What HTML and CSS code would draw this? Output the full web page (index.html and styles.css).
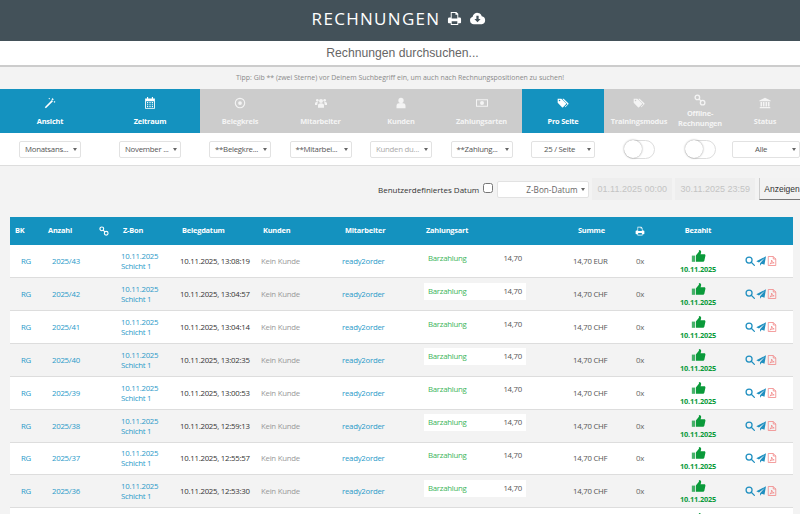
FILE: index.html
```html
<!DOCTYPE html>
<html lang="en">
<head>
    <meta charset="UTF-8">
    <meta name="viewport" content="width=device-width, initial-scale=1.0">
    <title>Rechnungen</title>
    <link rel="stylesheet" href="styles.css">
</head>
<body>

    <svg class="icon-defs" width="0" height="0">
        <symbol id="i-print" viewBox="0 0 16 16"><path fill-rule="evenodd" d="M4 1h6l2 2v4h1.500a1.500 1.500 0 0 1 1.500 1.500V12a1 1 0 0 1-1 1h-2v2H4v-2H2a1 1 0 0 1-1-1V8.500A1.500 1.500 0 0 1 2.500 7H4zM5 2.200V8h6V4H9V2.200zM5 11v2.900h6V11z"/></symbol>
        <symbol id="i-cloud" viewBox="0 0 18 16"><path fill-rule="evenodd" d="M5 14a4 4 0 0 1-1.200-7.800A5 5 0 0 1 9.500 2a4.500 4.500 0 0 1 4 3.500A4.300 4.300 0 0 1 13.500 14zM7.800 5v3.500H5.700L9 12l3.300-3.500h-2.100V5z"/></symbol>
        <symbol id="i-wand" viewBox="0 0 16 16"><path d="M1 13.500 10.500 4l1.500 1.500L2.500 15z"/><path d="M11.500 1l.6 1.300 1.300.6-1.300.6-.6 1.300-.6-1.300-1.300-.6 1.300-.6zM14 5l.5 1 1 .5-1 .5-.5 1-.5-1-1-.5 1-.5zM7 1l.4.8.8.4-.8.4-.4.8-.4-.8-.8-.4.8-.4z"/></symbol>
        <symbol id="i-calendar" viewBox="0 0 16 16"><path fill-rule="evenodd" d="M4 0h1.500v2h5V0H12v2h2.500v13.500h-13V2H4zM2.700 5.500v9h10.600v-9zM4 6.700h1.600v1.600H4zM7.200 6.700h1.600v1.600H7.200zM10.400 6.700H12v1.600h-1.600zM4 9.500h1.600v1.600H4zM7.200 9.500h1.600v1.600H7.200zM10.400 9.500H12v1.600h-1.600zM4 12h1.600v1.500H4zM7.200 12h1.600v1.500H7.200zM10.400 12H12v1.500h-1.600z"/></symbol>
        <symbol id="i-target" viewBox="0 0 16 16"><path fill-rule="evenodd" d="M8 1a7 7 0 1 1 0 14A7 7 0 0 1 8 1zm0 1.500a5.500 5.500 0 1 0 0 11 5.500 5.500 0 0 0 0-11zM8 5.500a2.500 2.500 0 1 1 0 5 2.500 2.500 0 0 1 0-5z"/></symbol>
        <symbol id="i-users" viewBox="0 0 18 16"><circle cx="9" cy="5" r="3"/><circle cx="3.500" cy="4" r="2"/><circle cx="14.500" cy="4" r="2"/><path d="M4.500 15v-3.500C4.500 9.500 6 8.500 9 8.500s4.500 1 4.500 3V15z"/><path d="M0 11V8.500C0 7 1.500 6.500 4 6.500 4.500 7.500 3.500 8.500 3.300 11zM18 11V8.500c0-1.500-1.500-2-4-2-.5 1 .5 2 .7 4.500z"/></symbol>
        <symbol id="i-user" viewBox="0 0 16 16"><circle cx="8" cy="4.500" r="3.500"/><path d="M2 15v-3.500C2 9 4 8 8 8s6 1 6 3.500V15z"/></symbol>
        <symbol id="i-money" viewBox="0 0 18 16"><path fill-rule="evenodd" d="M0 2.500h18v11H0zM1.500 4v8h15V4zM9 5a3 3 0 1 1 0 6 3 3 0 0 1 0-6z"/></symbol>
        <symbol id="i-tags" viewBox="0 0 18 16"><path fill-rule="evenodd" d="M1 1.500h5.500l7 7a1 1 0 0 1 0 1.500l-4.500 4.500a1 1 0 0 1-1.500 0L1 7.500zM3.800 3a1.200 1.200 0 1 0 0 2.400 1.200 1.200 0 0 0 0-2.400z"/><path d="M8.500 1.500h1.500l7 7a1 1 0 0 1 0 1.500l-4.500 4.500-.8-.8 4-4-7-7z"/></symbol>
        <symbol id="i-link" viewBox="0 0 16 16"><g fill="none" stroke="currentColor" stroke-width="1.800"><circle cx="4.500" cy="4.500" r="3"/><circle cx="11.500" cy="11.500" r="3"/><path d="M6.500 6.500l3 3"/></g></symbol>
        <symbol id="i-bank" viewBox="0 0 16 16"><path d="M8 1l7.500 3.500v1H.5v-1zM2 6.500h2.200v6H2zM5.300 6.500h2v6h-2zM8.700 6.500h2v6h-2zM11.800 6.500H14v6h-2.200zM1 13.200h14V15H1z"/></symbol>
        <symbol id="i-thumb" viewBox="0 0 18 16"><path opacity=".75" d="M1 7.500h3.800V15H1z"/><path d="M5.800 7.500 9.500 3V.8c1.800 0 2.700 1 2.700 2.400 0 1-.4 2-.8 2.800h4.500c1 0 1.600.8 1.400 1.800l-1.300 6c-.2.800-.8 1.200-1.500 1.200H5.800z"/></symbol>
        <symbol id="i-search" viewBox="0 0 16 16"><g fill="none" stroke="currentColor" stroke-width="2"><circle cx="6.500" cy="6.500" r="4.800"/><path d="M10 10l5 5" stroke-linecap="round"/></g></symbol>
        <symbol id="i-plane" viewBox="0 0 16 16"><path d="M16 .5 13.500 14 9 12.200 6.500 15.500v-4L14 3 4.700 10.200.5 8.500z"/></symbol>
        <symbol id="i-pdf" viewBox="0 0 14 16"><g fill="none" stroke="currentColor" stroke-width="1.200"><path d="M1 .8h8l4 4v10.400H1z"/><path d="M9 .8v4h4"/><path d="M3.500 13c2-1.500 3-4 3-6.500 0 2 1.500 4 4 4.500-2.500 0-5 .5-7 2z"/></g></symbol>
    </svg>

    <header class="page-header">
        <span class="page-title">RECHNUNGEN</span>
        <svg class="title-icon"><use href="#i-print"/></svg>
        <svg class="title-icon title-icon-wide"><use href="#i-cloud"/></svg>
    </header>

    <div class="search-bar">Rechnungen durchsuchen...</div>
    <p class="tip">Tipp: Gib ** (zwei Sterne) vor Deinem Suchbegriff ein, um auch nach Rechnungspositionen zu suchen!</p>

    <nav class="tabs">
        <div class="tab active"><svg><use href="#i-wand"/></svg><span>Ansicht</span></div>
        <div class="tab active"><svg><use href="#i-calendar"/></svg><span>Zeitraum</span></div>
        <div class="tab"><svg><use href="#i-target"/></svg><span>Belegkreis</span></div>
        <div class="tab"><svg><use href="#i-users"/></svg><span>Mitarbeiter</span></div>
        <div class="tab"><svg><use href="#i-user"/></svg><span>Kunden</span></div>
        <div class="tab"><svg><use href="#i-money"/></svg><span>Zahlungsarten</span></div>
        <div class="tab active"><svg><use href="#i-tags"/></svg><span>Pro Seite</span></div>
        <div class="tab"><svg><use href="#i-tags"/></svg><span>Trainingsmodus</span></div>
        <div class="tab tab-tight"><svg><use href="#i-link"/></svg><span>Offline-<br>Rechnungen</span></div>
        <div class="tab tab-last"><svg><use href="#i-bank"/></svg><span>Status</span></div>
    </nav>

    <div class="filters">
        <div class="filter"><div class="select">Monatsans...</div></div>
        <div class="filter"><div class="select">November ...</div></div>
        <div class="filter"><div class="select">**Belegkre...</div></div>
        <div class="filter"><div class="select">**Mitarbei...</div></div>
        <div class="filter"><div class="select select-muted">Kunden du...</div></div>
        <div class="filter"><div class="select">**Zahlung...</div></div>
        <div class="filter"><div class="select select-wide">25 / Seite</div></div>
        <div class="filter"><div class="toggle"></div></div>
        <div class="filter"><div class="toggle"></div></div>
        <div class="filter filter-last"><div class="select select-status">Alle</div></div>
    </div>

    <div class="date-row">
        <label class="date-label">Benutzerdefiniertes Datum</label>
        <input type="checkbox" class="date-check">
        <div class="select select-date">Z-Bon-Datum</div>
        <div class="date-input">01.11.2025 00:00</div>
        <div class="date-input">30.11.2025 23:59</div>
        <button class="show-btn">Anzeigen</button>
    </div>

    <table class="invoices">
        <colgroup>
            <col class="c-bk"><col class="c-num"><col class="c-link"><col class="c-zbon"><col class="c-date"><col class="c-cust"><col class="c-staff"><col class="c-pay"><col class="c-sum"><col class="c-print"><col class="c-paid"><col class="c-act">
        </colgroup>
        <thead>
            <tr>
                <th class="bk">BK</th>
                <th class="num">Anzahl</th>
                <th class="link-col"><svg class="th-icon"><use href="#i-link"/></svg></th>
                <th class="zbon">Z-Bon</th>
                <th class="date">Belegdatum</th>
                <th class="cust">Kunden</th>
                <th class="staff">Mitarbeiter</th>
                <th class="pay">Zahlungsart</th>
                <th class="sum">Summe</th>
                <th class="print"><svg class="th-icon"><use href="#i-print"/></svg></th>
                <th class="paid">Bezahlt</th>
                <th></th>
            </tr>
        </thead>
        <tbody>
            <tr>
                <td class="bk"><a>RG</a></td><td class="num"><a>2025/43</a></td><td></td>
                <td class="zbon"><a>10.11.2025<br>Schicht 1</a></td><td class="date">10.11.2025, 13:08:19</td>
                <td class="cust">Kein Kunde</td><td class="staff"><a>ready2order</a></td>
                <td class="pay"><div class="pay-box"><span>Barzahlung</span><span class="amount">14,70</span></div></td>
                <td class="sum">14,70 EUR</td><td class="print">0x</td>
                <td class="paid"><svg class="thumb"><use href="#i-thumb"/></svg><b>10.11.2025</b></td>
                <td class="actions"><svg class="blue"><use href="#i-search"/></svg><svg class="blue"><use href="#i-plane"/></svg><svg class="red"><use href="#i-pdf"/></svg></td>
            </tr>
            <tr>
                <td class="bk"><a>RG</a></td><td class="num"><a>2025/42</a></td><td></td>
                <td class="zbon"><a>10.11.2025<br>Schicht 1</a></td><td class="date">10.11.2025, 13:04:57</td>
                <td class="cust">Kein Kunde</td><td class="staff"><a>ready2order</a></td>
                <td class="pay"><div class="pay-box"><span>Barzahlung</span><span class="amount">14,70</span></div></td>
                <td class="sum">14,70 CHF</td><td class="print">0x</td>
                <td class="paid"><svg class="thumb"><use href="#i-thumb"/></svg><b>10.11.2025</b></td>
                <td class="actions"><svg class="blue"><use href="#i-search"/></svg><svg class="blue"><use href="#i-plane"/></svg><svg class="red"><use href="#i-pdf"/></svg></td>
            </tr>
            <tr>
                <td class="bk"><a>RG</a></td><td class="num"><a>2025/41</a></td><td></td>
                <td class="zbon"><a>10.11.2025<br>Schicht 1</a></td><td class="date">10.11.2025, 13:04:14</td>
                <td class="cust">Kein Kunde</td><td class="staff"><a>ready2order</a></td>
                <td class="pay"><div class="pay-box"><span>Barzahlung</span><span class="amount">14,70</span></div></td>
                <td class="sum">14,70 CHF</td><td class="print">0x</td>
                <td class="paid"><svg class="thumb"><use href="#i-thumb"/></svg><b>10.11.2025</b></td>
                <td class="actions"><svg class="blue"><use href="#i-search"/></svg><svg class="blue"><use href="#i-plane"/></svg><svg class="red"><use href="#i-pdf"/></svg></td>
            </tr>
            <tr>
                <td class="bk"><a>RG</a></td><td class="num"><a>2025/40</a></td><td></td>
                <td class="zbon"><a>10.11.2025<br>Schicht 1</a></td><td class="date">10.11.2025, 13:02:35</td>
                <td class="cust">Kein Kunde</td><td class="staff"><a>ready2order</a></td>
                <td class="pay"><div class="pay-box"><span>Barzahlung</span><span class="amount">14,70</span></div></td>
                <td class="sum">14,70 CHF</td><td class="print">0x</td>
                <td class="paid"><svg class="thumb"><use href="#i-thumb"/></svg><b>10.11.2025</b></td>
                <td class="actions"><svg class="blue"><use href="#i-search"/></svg><svg class="blue"><use href="#i-plane"/></svg><svg class="red"><use href="#i-pdf"/></svg></td>
            </tr>
            <tr>
                <td class="bk"><a>RG</a></td><td class="num"><a>2025/39</a></td><td></td>
                <td class="zbon"><a>10.11.2025<br>Schicht 1</a></td><td class="date">10.11.2025, 13:00:53</td>
                <td class="cust">Kein Kunde</td><td class="staff"><a>ready2order</a></td>
                <td class="pay"><div class="pay-box"><span>Barzahlung</span><span class="amount">14,70</span></div></td>
                <td class="sum">14,70 CHF</td><td class="print">0x</td>
                <td class="paid"><svg class="thumb"><use href="#i-thumb"/></svg><b>10.11.2025</b></td>
                <td class="actions"><svg class="blue"><use href="#i-search"/></svg><svg class="blue"><use href="#i-plane"/></svg><svg class="red"><use href="#i-pdf"/></svg></td>
            </tr>
            <tr>
                <td class="bk"><a>RG</a></td><td class="num"><a>2025/38</a></td><td></td>
                <td class="zbon"><a>10.11.2025<br>Schicht 1</a></td><td class="date">10.11.2025, 12:59:13</td>
                <td class="cust">Kein Kunde</td><td class="staff"><a>ready2order</a></td>
                <td class="pay"><div class="pay-box"><span>Barzahlung</span><span class="amount">14,70</span></div></td>
                <td class="sum">14,70 CHF</td><td class="print">0x</td>
                <td class="paid"><svg class="thumb"><use href="#i-thumb"/></svg><b>10.11.2025</b></td>
                <td class="actions"><svg class="blue"><use href="#i-search"/></svg><svg class="blue"><use href="#i-plane"/></svg><svg class="red"><use href="#i-pdf"/></svg></td>
            </tr>
            <tr>
                <td class="bk"><a>RG</a></td><td class="num"><a>2025/37</a></td><td></td>
                <td class="zbon"><a>10.11.2025<br>Schicht 1</a></td><td class="date">10.11.2025, 12:55:57</td>
                <td class="cust">Kein Kunde</td><td class="staff"><a>ready2order</a></td>
                <td class="pay"><div class="pay-box"><span>Barzahlung</span><span class="amount">14,70</span></div></td>
                <td class="sum">14,70 CHF</td><td class="print">0x</td>
                <td class="paid"><svg class="thumb"><use href="#i-thumb"/></svg><b>10.11.2025</b></td>
                <td class="actions"><svg class="blue"><use href="#i-search"/></svg><svg class="blue"><use href="#i-plane"/></svg><svg class="red"><use href="#i-pdf"/></svg></td>
            </tr>
            <tr>
                <td class="bk"><a>RG</a></td><td class="num"><a>2025/36</a></td><td></td>
                <td class="zbon"><a>10.11.2025<br>Schicht 1</a></td><td class="date">10.11.2025, 12:53:30</td>
                <td class="cust">Kein Kunde</td><td class="staff"><a>ready2order</a></td>
                <td class="pay"><div class="pay-box"><span>Barzahlung</span><span class="amount">14,70</span></div></td>
                <td class="sum">14,70 CHF</td><td class="print">0x</td>
                <td class="paid"><svg class="thumb"><use href="#i-thumb"/></svg><b>10.11.2025</b></td>
                <td class="actions"><svg class="blue"><use href="#i-search"/></svg><svg class="blue"><use href="#i-plane"/></svg><svg class="red"><use href="#i-pdf"/></svg></td>
            </tr>
            <tr>
                <td class="bk"></td><td class="num"></td><td></td>
                <td class="zbon"></td><td class="date"></td>
                <td class="cust"></td><td class="staff"></td>
                <td class="pay"></td>
                <td class="sum"></td><td class="print"></td>
                <td class="paid"><svg class="thumb"><use href="#i-thumb"/></svg><b>10.11.2025</b></td>
                <td class="actions"></td>
            </tr>
        </tbody>
    </table>

</body>
</html>
```

FILE: styles.css
```css
html, body {
    height: 514px;
    overflow: hidden;
}
body {
    font-family: 'Open Sans', sans-serif;
    background-color: #f3f3f3;
    color: #444;
    margin: 0;
    padding: 0;
}
.icon-defs {
    display: block;
    height: 0;
}
svg {
    fill: currentColor;
}

/* header */
.page-header {
    height: 41px;
    background-color: #435159;
    color: #fff;
    display: flex;
    align-items: center;
    justify-content: center;
    gap: 7px;
    padding: 0 2px 4px 0;
    box-sizing: border-box;
}
.page-title {
    font-size: 17px;
    letter-spacing: 1.3px;
}
.title-icon {
    width: 15px;
    height: 15px;
}
.title-icon-wide {
    width: 17px;
}
.search-bar {
    height: 24px;
    line-height: 24px;
    padding-left: 5px;
    background-color: #fff;
    border-bottom: 2px solid #ccc;
    margin-bottom: -1px;
    text-align: center;
    font-family: 'Liberation Sans', sans-serif;
    font-size: 12.2px;
    color: #666;
}
.tip {
    margin: 0;
    height: 23px;
    line-height: 23px;
    text-align: center;
    font-size: 6.95px;
    color: #8a8a8a;
}

/* tabs */
.tabs, .filters {
    display: grid;
    grid-template-columns: 100px 100px 80px 81px 80px 81px 82px 70px 52px 74px;
}
.tabs {
    height: 44px;
}
.tab {
    background-color: #ccc;
    color: #f4f4f4;
    display: flex;
    flex-direction: column;
    align-items: center;
    justify-content: flex-start;
    text-align: center;
    font-size: 7.4px;
    letter-spacing: -0.2px;
    font-weight: 700;
    line-height: 10px;
    padding-top: 8px;
    box-sizing: border-box;
}
.tab svg {
    width: 12px;
    height: 12px;
    margin-bottom: 7px;
}
.tab.active {
    background-color: #1492bf;
    color: #fff;
}
.tab-tight {
    padding-top: 5px;
}
.tab-tight svg {
    margin-bottom: 2px;
}
.tab-last {
    padding-left: 4px;
}

/* filters */
.filters {
    height: 32px;
    background-color: #fff;
    border-bottom: 1px solid #ddd;
}
.filter {
    display: flex;
    align-items: center;
    justify-content: center;
}
.filter-last {
    justify-content: flex-end;
}
.select {
    width: 62px;
    height: 17px;
    line-height: 15px;
    box-sizing: border-box;
    padding-left: 5px;
    background-color: #fff;
    border: 1px solid #e2e2e2;
    border-radius: 2px;
    color: #555;
    font-size: 7.8px;
    letter-spacing: -0.25px;
    white-space: nowrap;
    position: relative;
}
.select::after {
    content: "";
    position: absolute;
    right: 3px;
    top: 6px;
    border-left: 2.5px solid transparent;
    border-right: 2.5px solid transparent;
    border-top: 3px solid #666;
}
.select-muted {
    color: #aaa;
}
.select-wide {
    width: 64px;
    padding-left: 12px;
}
.select-status {
    width: 68px;
    padding-left: 22px;
}
.toggle {
    width: 31px;
    height: 19px;
    border: 1px solid #ddd;
    border-radius: 10px;
    box-sizing: border-box;
    position: relative;
}
.toggle::before {
    content: "";
    position: absolute;
    left: -1px;
    top: -1px;
    width: 18px;
    height: 18px;
    background-color: #fff;
    border-radius: 50%;
    box-shadow: 0 0 2px rgba(0, 0, 0, 0.45);
}

/* date row */
.date-row {
    height: 39px;
    display: flex;
    align-items: center;
    padding: 7px 0 0 378px;
    box-sizing: border-box;
    overflow: hidden;
    white-space: nowrap;
}
.date-label {
    font-size: 8px;
    color: #333;
}
.date-check {
    width: 10px;
    height: 10px;
    margin: 0 4px 2px 4px;
}
.select-date {
    width: 92px;
    flex-shrink: 0;
    padding-left: 28px;
    color: #666;
    font-size: 8.2px;
    letter-spacing: 0;
}
.date-input {
    width: 80px;
    flex-shrink: 0;
    height: 22px;
    line-height: 22px;
    margin-left: 3px;
    text-align: center;
    background-color: #eee;
    color: #c4c4c4;
    font-family: 'Liberation Sans', sans-serif;
    font-size: 9px;
}
.show-btn {
    flex-shrink: 0;
    width: 41px;
    height: 22px;
    margin-left: 4px;
    padding: 0 0 0 4px;
    text-align: left;
    font-family: 'Liberation Sans', sans-serif;
    font-size: 8.5px;
    color: #333;
    background-color: #f2f2f2;
    border: none;
    border-bottom: 1px solid #777;
    border-left: 1px solid #ccc;
}

/* table */
.invoices {
    table-layout: fixed;
    border-collapse: collapse;
    width: 783px;
    margin: 12px 0 0 10px;
    font-size: 7.8px;
    letter-spacing: -0.25px;
    color: #444;
}
.c-bk { width: 35px; }
.c-num { width: 47px; }
.c-link { width: 26px; }
.c-zbon { width: 58px; }
.c-date { width: 82px; }
.c-cust { width: 82px; }
.c-staff { width: 81px; }
.c-pay { width: 149px; }
.c-sum { width: 60px; }
.c-print { width: 35px; }
.c-paid { width: 66px; }
.c-act { width: 62px; }
.invoices th {
    height: 28px;
    box-sizing: border-box;
    padding: 0 0 2px 0;
    background-color: #1492bf;
    color: #fff;
    text-align: left;
    font-size: 7.4px;
    letter-spacing: -0.2px;
    font-weight: 700;
}
.invoices td {
    height: 32.85px;
    padding: 0;
    box-sizing: border-box;
    border-bottom: 1px solid #ddd;
    background-color: #fff;
    white-space: nowrap;
}
.invoices tbody tr:nth-child(even) td {
    background-color: #f3f3f3;
}
.invoices a {
    color: #2a9ac9;
}
th.bk { padding-left: 5px; }
th.num { padding-left: 3px; }
th.link-col { padding-left: 7px; }
th.zbon { padding-left: 5px; }
th.date { padding-left: 6px; }
th.cust { padding-left: 5px; }
th.staff { padding-left: 5px; }
th.pay { padding-left: 5px; }
th.sum { padding-left: 8px; }
th.print { padding-left: 5px; }
th.paid { text-align: center; }
td.bk { padding-left: 11px; }
td.num { padding-left: 7px; }
td.zbon { padding-left: 3px; line-height: 10px; }
td.date { padding-left: 4px; color: #333; }
td.cust { padding-left: 3px; color: #999; }
td.staff { padding-left: 2px; }
td.pay { padding-left: 3px; }
td.sum { padding-left: 3px; color: #555; }
td.print { padding-left: 6px; color: #666; }
td.paid {
    text-align: center;
    color: #0a9a3a;
    line-height: 8px;
}
td.paid b {
    display: block;
    font-size: 7.4px;
    letter-spacing: -0.2px;
}
td.actions {
    padding-left: 14px;
    line-height: 0;
}
.pay-box {
    width: 102px;
    height: 17px;
    line-height: 17px;
    margin-bottom: 6px;
    padding: 0 4px;
    box-sizing: border-box;
    display: flex;
    justify-content: space-between;
    color: #3cb55a;
}
.invoices tbody tr:nth-child(even) .pay-box {
    background-color: #fff;
}
.amount {
    color: #555;
}
.th-icon {
    width: 10px;
    height: 10px;
    vertical-align: middle;
}
.thumb {
    display: block;
    width: 15px;
    height: 14px;
    margin: 0 auto 2px;
}
.actions svg {
    width: 10px;
    height: 10px;
    margin-right: 1px;
}
.blue { color: #1f8fc0; }
.red { color: #f08080; }
```
